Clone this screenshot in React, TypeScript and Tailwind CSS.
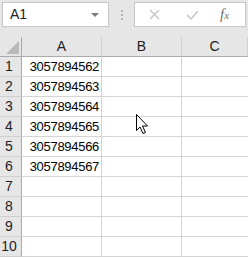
import React from 'react'

const rows = ['3057894562', '3057894563', '3057894564', '3057894565', '3057894566', '3057894567', '', '', '', '']

const font = { fontFamily: '"Liberation Sans", Arial, sans-serif' }

export default function App() {
    return (
        <div className="w-[248px] h-[258px] overflow-hidden bg-white relative" style={font}>
            <div className="h-[37px] bg-[#e6e6e6] flex items-start pt-[2px] pl-[2px]">
                <div className="w-[107px] h-[25px] bg-white border border-[#c6c6c6] flex items-center pl-[7px] pr-[9px]">
                    <span className="text-[14px] text-[#222]">A1</span>
                    <svg className="ml-auto" width="8" height="4" viewBox="0 0 8 4">
                        <path d="M0 0h8L4 4z" fill="#7a7a7a" />
                    </svg>
                </div>
                <div className="w-[25px] h-[25px] flex flex-col items-center justify-center gap-[2px]">
                    <span className="w-[2px] h-[2px] bg-[#b4b4b4]" />
                    <span className="w-[2px] h-[2px] bg-[#b4b4b4]" />
                    <span className="w-[2px] h-[2px] bg-[#b4b4b4]" />
                </div>
                <div className="w-[112px] h-[25px] bg-white border border-[#c6c6c6] flex items-center">
                    <svg className="ml-[14px]" width="11" height="11" viewBox="0 0 11 11">
                        <path d="M1 1l9 9M10 1l-9 9" stroke="#c3c3c3" strokeWidth="1.3" />
                    </svg>
                    <svg className="ml-[26px]" width="13" height="10" viewBox="0 0 13 10">
                        <path d="M1 5l4 4 7-8" stroke="#c3c3c3" strokeWidth="1.4" fill="none" />
                    </svg>
                    <span className="ml-[21px] text-[15px] italic text-[#707070]" style={{ fontFamily: '"Liberation Serif", serif' }}>
                        f<span className="text-[11px]">x</span>
                    </span>
                </div>
            </div>
            <div className="grid grid-cols-[22px_80px_80px_1fr] auto-rows-[20px]">
                <div className="bg-[#e6e6e6] border-r border-b border-[#ababab] relative">
                    <svg className="absolute right-[2px] bottom-[2px]" width="13" height="13" viewBox="0 0 13 13">
                        <path d="M13 0v13H0z" fill="#b9b9b9" />
                    </svg>
                </div>
                {['A', 'B', 'C'].map((c) => (
                    <div
                        key={c}
                        className="bg-[#e6e6e6] border-r border-b border-r-[#d0d0d0] border-b-[#ababab] flex items-center justify-center text-[14px] text-[#222]"
                    >
                        {c}
                    </div>
                ))}
                {rows.map((v, i) => (
                    <React.Fragment key={i}>
                        <div className="bg-[#e6e6e6] border-r border-b border-r-[#ababab] border-b-[#d0d0d0] flex items-center justify-center pr-[3px] text-[14px] text-[#222]">
                            {i + 1}
                        </div>
                        <div className="border-r border-b border-[#d4d4d4] flex items-center justify-end pr-[2px] text-[13px] tracking-[-0.3px] text-black">
                            {v}
                        </div>
                        <div className="border-r border-b border-[#d4d4d4]" />
                        <div className="border-b border-[#d4d4d4]" />
                    </React.Fragment>
                ))}
            </div>
            <svg className="absolute left-[136px] top-[114px]" width="13" height="21" viewBox="0 0 13 21">
                <path d="M0.5 0.5v16l3.5-3.5 3 6.5 2.5-1-3-6.5h5z" fill="white" stroke="black" strokeWidth="1" />
            </svg>
        </div>
    )
}
